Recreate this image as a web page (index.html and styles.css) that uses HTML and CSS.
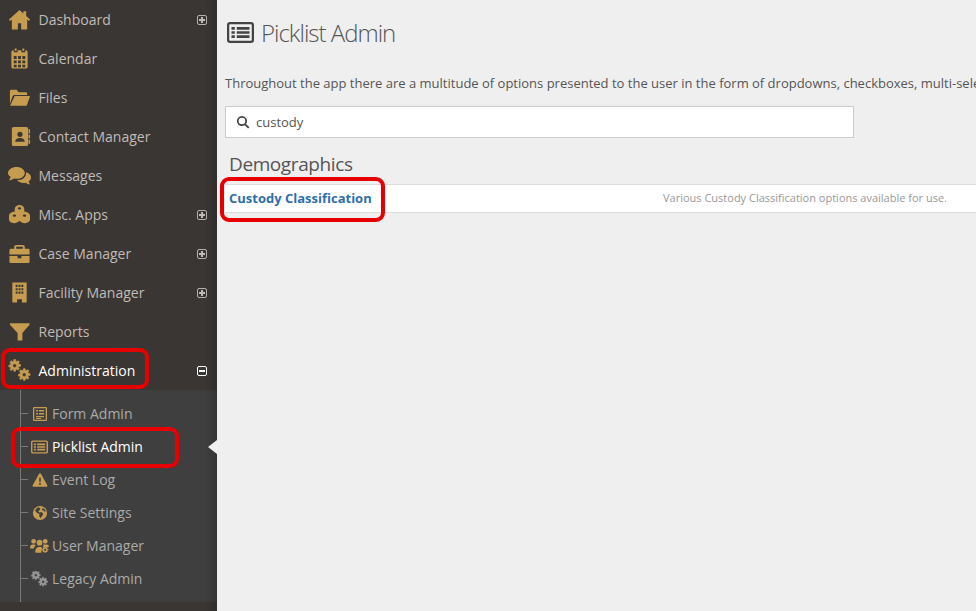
FILE: index.html
```html
<!DOCTYPE html>
<html lang="en">
<head>
<meta charset="utf-8">
<title>Picklist Admin</title>
<link rel="stylesheet" href="styles.css">
</head>
<body>
<div class="app">
  <nav class="sidebar">
    <ul class="nav">
      <li class="nav-item"><svg class="ico" viewBox="0 0 24 24"><path d="M12 2 1 12l1.200 1.500L4 12v10.500h6.300V16h3.400v6.500H20V12l1.800 1.500L23 12l-4-3.600V3.500h-3v2.200z"/></svg><span class="label">Dashboard</span><span class="toggle plus"></span></li>
      <li class="nav-item"><svg class="ico" viewBox="0 0 24 24"><path fill-rule="evenodd" d="M7 1.500h2V4H7zM15 1.500h2V4h-2zM5.500 3.500H6V5.500h4v-2h4v2h4v-2h.5a2 2 0 0 1 2 2v15a2 2 0 0 1-2 2h-13a2 2 0 0 1-2-2v-15a2 2 0 0 1 2-2zM6 9.500v3h3v-3zm4.500 0v3h3v-3zm4.500 0v3h3v-3zM6 14v3h3v-3zm4.500 0v3h3v-3zm4.500 0v3h3v-3zM6 18.500V21h3v-2.500zm4.500 0V21h3v-2.500zm4.500 0V21h3v-2.500z"/></svg><span class="label">Calendar</span></li>
      <li class="nav-item"><svg class="ico" viewBox="0 0 24 24"><path d="M2 18.500V5.500A1.500 1.500 0 0 1 3.500 4h5.500l2 2.500h7.500A1.500 1.500 0 0 1 20 8v1.500H7a2.500 2.500 0 0 0-2.300 1.500z"/><path d="M7 10.500h16l-3.500 10H2.200z"/></svg><span class="label">Files</span></li>
      <li class="nav-item"><svg class="ico" viewBox="0 0 24 24"><path fill-rule="evenodd" d="M6 2h13a2 2 0 0 1 2 2v16a2 2 0 0 1-2 2H6a2 2 0 0 1-2-2V4a2 2 0 0 1 2-2zm6.500 5a2.700 2.700 0 1 0 0 5.400 2.700 2.700 0 0 0 0-5.400zM7.500 17.500h10c0-2.500-2-4-5-4s-5 1.500-5 4z"/><path d="M21.500 4.500h1.500v4h-1.500zM21.500 10h1.500v4h-1.500zM21.500 15.500h1.500v4h-1.500z"/></svg><span class="label">Contact Manager</span></li>
      <li class="nav-item"><svg class="ico" viewBox="0 0 24 24"><path d="M9 3c4.700 0 8.500 2.800 8.500 6.300 0 3.400-3.800 6.200-8.500 6.200-1 0-2-.1-2.800-.4C4.800 16.300 3 17 .8 17c1-1 1.800-2.300 1.900-3.600C1 12.300 0 10.900 0 9.300 0 5.800 4 3 9 3z"/><path d="M18.800 8.500C21.800 9.400 24 11.500 24 14c0 1.600-.9 3-2.400 4 .1 1.200.8 2.300 1.700 3.300-1.900 0-3.500-.7-4.700-1.800-.8.200-1.600.3-2.400.3-3 0-5.500-1.200-6.800-3 5.700.2 10-3.200 9.400-8.300z"/></svg><span class="label">Messages</span></li>
      <li class="nav-item"><svg class="ico" viewBox="0 0 24 24"><path fill-rule="evenodd" d="M12 2c2.800 0 5 1.800 5 4.200v3c2.900-.2 6 1.600 6 4.600v3.200c0 2.300-2.500 4-5.300 4-2.300 0-4.400-1-5.700-2.500-1.300 1.500-3.400 2.500-5.700 2.500C3.500 21 1 19.300 1 17v-3.200c0-3 3.100-4.800 6-4.600v-3C7 3.800 9.200 2 12 2zm0 2.500a1.800 1.200 0 1 0 0 2.400 1.800 1.200 0 0 0 0-2.400zM6.700 12a1.800 1.200 0 1 0 0 2.400 1.800 1.200 0 0 0 0-2.400zm10.600 0a1.800 1.200 0 1 0 0 2.400 1.800 1.200 0 0 0 0-2.400z"/></svg><span class="label">Misc. Apps</span><span class="toggle plus"></span></li>
      <li class="nav-item"><svg class="ico" viewBox="0 0 24 24"><path fill-rule="evenodd" d="M8.500 3h7a2 2 0 0 1 2 2v2h3.500A1.500 1.500 0 0 1 22.500 8.500V13h-21V8.500A1.500 1.500 0 0 1 3 7h3.500V5a2 2 0 0 1 2-2zm0 2v2h7V5z"/><path d="M1.500 14.500h8.500V17h4v-2.500h8.500V20.500a1.500 1.500 0 0 1-1.500 1.500H3a1.500 1.500 0 0 1-1.500-1.500z"/></svg><span class="label">Case Manager</span><span class="toggle plus"></span></li>
      <li class="nav-item"><svg class="ico" viewBox="0 0 24 24"><path fill-rule="evenodd" d="M4.500 1.500h15v21h-5V19h-5v3.500h-5zM8 4v2.200h2V4zm3 0v2.200h2V4zm3 0v2.200h2V4zM8 7.500v2.200h2V7.500zm3 0v2.200h2V7.500zm3 0v2.200h2V7.500zM8 11v2.200h2V11zm3 0v2.200h2V11zm3 0v2.200h2V11z"/></svg><span class="label">Facility Manager</span><span class="toggle plus"></span></li>
      <li class="nav-item"><svg class="ico" viewBox="0 0 24 24"><path d="M2 3.500h20.500v1.500L15 13.500v8h-5v-8L2 5z"/></svg><span class="label">Reports</span></li>
      <li class="nav-item active"><svg class="ico gears" viewBox="0 0 24 24"><use href="#gear" transform="translate(0 0) scale(.58)"/><use href="#gear" transform="translate(10 9.500) scale(.58)"/></svg><span class="label">Administration</span><span class="toggle minus"></span></li>
    </ul>
    <ul class="subnav">
      <li class="sub-item"><svg class="sub-ico form-ico" viewBox="0 0 14 14"><path fill-rule="evenodd" d="M1 0h12a1 1 0 0 1 1 1v12a1 1 0 0 1-1 1H1a1 1 0 0 1-1-1V1a1 1 0 0 1 1-1zm.300 1.300v11.400h11.400V1.300zM3 3h2v1.500H3zM6 3h5v1.500H6zM3 6h2v1.500H3zM6 6h5v1.500H6zM3 9h8v1.200H3zM3 11h5v1H3z"/></svg><span>Form Admin</span></li>
      <li class="sub-item current"><svg class="sub-ico wide" viewBox="0 0 18 14"><use href="#listbox"/></svg><span>Picklist Admin</span></li>
      <li class="sub-item"><svg class="sub-ico" viewBox="0 0 18 18"><path fill-rule="evenodd" d="M9 1.500c.5 0 .9.300 1.200.7l7 12.600c.5.900-.1 1.700-1 1.700H1.800c-.9 0-1.500-.8-1-1.700l7-12.600c.3-.4.700-.7 1.200-.7zM8 6.500l.3 5h1.400l.3-5zm1 6a1.100 1.100 0 1 0 0 2.200 1.100 1.100 0 0 0 0-2.200z"/></svg><span>Event Log</span></li>
      <li class="sub-item"><svg class="sub-ico" viewBox="0 0 18 18"><path fill-rule="evenodd" d="M9 1a8 8 0 1 1 0 16A8 8 0 0 1 9 1zM3.500 6l1.500 2.500 2 1 1.500 1-.5 2 1.500 2.500 1-1.500 1.500-2 .5-2-2-1.500-2 .5L7 7l1.500-1 1-2-2-1.500C5.500 3 4.500 4.500 3.500 6zM12 3.500l-1 2 2 1 1.500 1 1-.5c-.5-1.500-2-3-3.500-3.500z"/></svg><span>Site Settings</span></li>
      <li class="sub-item"><svg class="sub-ico big" viewBox="0 0 20 16"><circle cx="3.800" cy="3" r="2.500"/><circle cx="16" cy="3" r="2.500"/><circle cx="10" cy="4.500" r="3"/><path d="M0 10c0-2 1-3.500 2.500-3.500H5L6 7.500c-1 .8-1.800 2-1.800 3H1c-.6 0-1-.2-1-.5zM14 6.500h3.500C19 6.500 20 8 20 9h-6zM5.500 14.500c0-3 1.500-5.500 4-5.500h2.500l.7 1.500-.7 3.500V15H6.500c-.6 0-1-.2-1-.5z"/><use href="#gear" transform="translate(12 8) scale(.33)"/></svg><span>User Manager</span></li>
      <li class="sub-item legacy"><svg class="sub-ico big gears" viewBox="0 0 24 22"><use href="#gear" transform="translate(0 -1) scale(.58)"/><use href="#gear" transform="translate(10 8) scale(.58)"/></svg><span>Legacy Admin</span></li>
    </ul>
    <span class="caret"></span>
  </nav>
  <main class="content">
    <h1 class="title"><svg class="title-ico" viewBox="0 0 18 14"><use href="#listbox"/></svg>Picklist Admin</h1>
    <p class="intro">Throughout the app there are a multitude of options presented to the user in the form of dropdowns, checkboxes, multi-select lists and other selectable inputs.</p>
    <div class="search"><svg class="search-ico" viewBox="0 0 16 16"><path fill-rule="evenodd" d="M6.800 1a5.800 5.800 0 0 1 4.700 9.200l3.800 3.800-1.500 1.500-3.800-3.800A5.800 5.800 0 1 1 6.800 1zm0 2a3.800 3.800 0 1 0 0 7.600 3.800 3.800 0 0 0 0-7.600z"/></svg><span>custody</span></div>
    <h2 class="group">Demographics</h2>
    <div class="row"><a class="row-link">Custody Classification</a><span class="row-desc">Various Custody Classification options available for use.</span></div>
  </main>
</div>
<div class="mark mark-admin"></div>
<div class="mark mark-pick"></div>
<div class="mark mark-cust"></div>
<svg class="defs" width="0" height="0">
  <defs>
    <path id="gear" fill-rule="evenodd" d="M10.500 1h3l.5 3 1.800.8L18.300 3l2.100 2.100-1.700 2.500.8 1.900 3 .5v3l-3 .5-.8 1.800 1.700 2.500-2.100 2.100-2.500-1.700-1.800.8-.5 3h-3l-.5-3-1.900-.8L5.700 21l-2.100-2.100 1.700-2.500-.8-1.800-3-.5v-3l3-.5.8-1.900-1.700-2.500L5.700 3l2.400 1.800L10 4zM12 8.500a3.500 3.500 0 1 0 0 7 3.500 3.500 0 0 0 0-7z"/>
    <path id="listbox" fill-rule="evenodd" d="M2 0h14a2 2 0 0 1 2 2v10a2 2 0 0 1-2 2H2a2 2 0 0 1-2-2V2a2 2 0 0 1 2-2zm0 1.500a.5.5 0 0 0-.5.5v10a.5.5 0 0 0 .5.5h14a.5.5 0 0 0 .5-.5V2a.5.5 0 0 0-.5-.5zM3 3.300h2.200v1.800H3zM6.500 3.300H15v1.800H6.500zM3 6.100h2.200v1.800H3zM6.500 6.100H15v1.800H6.500zM3 8.900h2.200v1.800H3zM6.500 8.900H15v1.800H6.500z"/>
  </defs>
</svg>
</body>
</html>
```

FILE: styles.css
```css
* { box-sizing: border-box; }
html, body { margin: 0; height: 100%; overflow: hidden; }
body { font-family: "Open Sans", sans-serif; background: #efefef; color: #555; }
ul { list-style: none; margin: 0; padding: 0; }
.app { display: flex; width: 976px; height: 611px; }
.sidebar {
  position: relative;
  flex: 0 0 217px;
  height: 611px;
  background: #3a3633;
}
.sidebar::after {
  content: "";
  position: absolute;
  top: 0;
  right: 0;
  bottom: 0;
  width: 12px;
  background: linear-gradient(to right, rgba(0, 0, 0, 0), rgba(0, 0, 0, .16));
}
.nav-item {
  display: flex;
  align-items: center;
  height: 39px;
  padding: 0 9px 0 8px;
  font-size: 14px;
  color: #c0bbb7;
}
.nav-item.active { color: #fff; }
.ico { flex: 0 0 23px; width: 23px; height: 23px; margin-right: 7.500px; fill: #c69c51; }
.gears { stroke: #c69c51; stroke-width: 1.200px; }
.label { flex: 1; }
.toggle {
  position: relative;
  width: 10px;
  height: 10px;
  margin-right: 1px;
  border: 1px solid #b5b0ac;
  border-radius: 2px;
}
.toggle::before {
  content: "";
  position: absolute;
  left: 1px;
  top: 3px;
  width: 6px;
  height: 2px;
  background: #c0bbb7;
}
.toggle.plus::after {
  content: "";
  position: absolute;
  left: 3px;
  top: 1px;
  width: 2px;
  height: 6px;
  background: #c0bbb7;
}
.active .toggle { border-color: #fff; }
.active .toggle::before { background: #fff; }
.subnav {
  position: relative;
  height: 212px;
  padding: 7px 0;
  background: #3f3f3f;
}
.subnav::before {
  content: "";
  position: absolute;
  left: 20px;
  top: 0;
  bottom: 0;
  width: 1px;
  background: #7a7a7a;
}
.sub-item {
  position: relative;
  display: flex;
  align-items: center;
  height: 33px;
  padding-left: 32px;
  font-size: 14px;
  color: #aaa;
}
.sub-item::before {
  content: "";
  position: absolute;
  left: 21px;
  top: 16px;
  width: 7px;
  height: 1px;
  background: #7a7a7a;
}
.sub-item.current { color: #fff; }
.sub-ico { flex: 0 0 16px; width: 16px; height: 16px; margin-right: 4px; fill: #c69c51; }
.sub-ico.wide { flex-basis: 17px; width: 17px; margin-left: -1px; }
.sub-ico.big { flex-basis: 19px; width: 19px; margin: 0 3px 0 -2px; }
.form-ico { flex-basis: 14px; width: 14px; height: 14px; margin: 0 5px 0 1px; }
.legacy .sub-ico { fill: #989898; stroke: #989898; }
.caret {
  position: absolute;
  right: 0;
  top: 440px;
  z-index: 1;
  width: 0;
  height: 0;
  border-top: 7px solid transparent;
  border-bottom: 7px solid transparent;
  border-right: 9px solid #efefef;
}
.content { flex: 1; min-width: 0; padding: 0 0 0 8px; }
.title {
  display: flex;
  align-items: center;
  margin: 0 0 0;
  padding: 12px 0 0 2px;
  height: 52px;
  font-size: 24px;
  font-weight: 300;
  letter-spacing: -1px;
  color: #555;
  white-space: nowrap;
}
.title-ico { width: 27px; height: 21px; margin-right: 7px; fill: #444; }
.intro {
  margin: 21px 0 0;
  height: 20px;
  font-size: 13px;
  line-height: 20px;
  white-space: nowrap;
  color: #555;
}
.search {
  display: flex;
  align-items: center;
  width: 629px;
  height: 32px;
  margin-top: 13px;
  padding-left: 10px;
  background: #fff;
  border: 1px solid #ccc;
  font-size: 13px;
  color: #555;
}
.search-ico { width: 14px; height: 14px; margin-right: 6px; fill: #444; }
.group {
  margin: 14px 0 0 4px;
  height: 32px;
  font-size: 19px;
  line-height: 24px;
  font-weight: 400;
  letter-spacing: -.4px;
  color: #555;
}
.row {
  display: flex;
  align-items: center;
  justify-content: space-between;
  width: 751px;
  height: 29px;
  padding: 0 29px 2px 4px;
  background: #fff;
  border-top: 1px solid #ddd;
  border-bottom: 1px solid #ddd;
}
.row-link { font-size: 13px; font-weight: 700; color: #2f6fa8; }
.row-desc { font-size: 11px; color: #999; }
.mark {
  position: absolute;
  border: 4px solid #e60000;
  border-radius: 9px;
}
.mark-admin { left: 1px; top: 348px; width: 148px; height: 41px; }
.mark-pick { left: 11px; top: 427px; width: 168px; height: 41px; }
.mark-cust { left: 220px; top: 177px; width: 165px; height: 45px; }
.defs { position: absolute; }
```
